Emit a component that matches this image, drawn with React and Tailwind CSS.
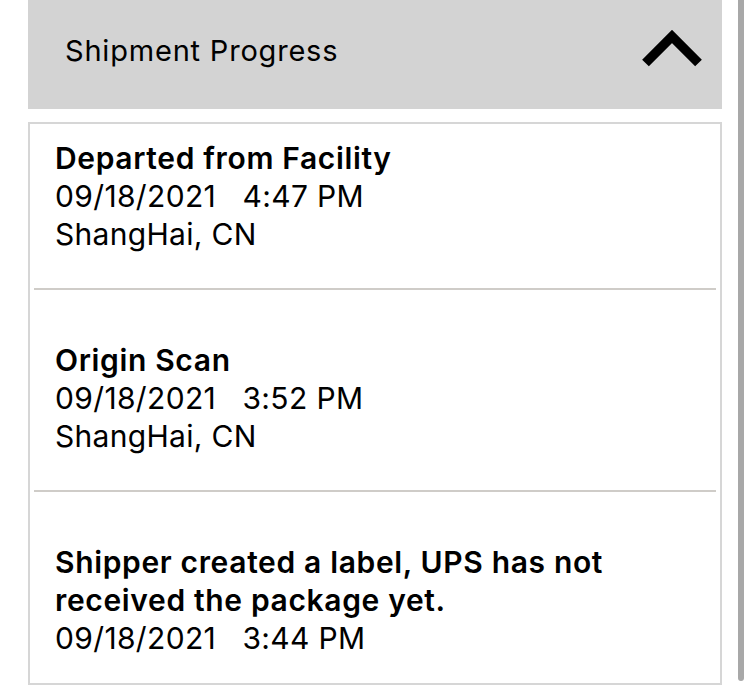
import React from "react";

const items = [
  { title: ["Departed from Facility"], date: "09/18/2021", time: "4:47 PM", loc: "ShangHai, CN" },
  { title: ["Origin Scan"], date: "09/18/2021", time: "3:52 PM", loc: "ShangHai, CN" },
  {
    title: ["Shipper created a label, UPS has not", "received the package yet."],
    date: "09/18/2021",
    time: "3:44 PM",
    loc: null,
  },
];

export default function App() {
  return (
    <div
      className="relative w-[750px] h-[685px] overflow-hidden bg-white text-black"
      style={{ fontFamily: "Inter, 'Noto Sans', sans-serif" }}
    >
      <div className="ml-[28px] w-[694px]">
        <div className="h-[109px] bg-[#d3d3d3] flex items-center justify-between pl-[37px] pr-[20px]">
          <span className="text-[29px] leading-none tracking-[0.8px] pb-[8px]">Shipment Progress</span>
          <svg width="60" height="40" viewBox="0 0 60 40" className="mb-[9px]">
            <polyline points="3.5,33 30,6.5 56.5,33" fill="none" stroke="#000" strokeWidth="9.5" strokeLinejoin="miter" />
          </svg>
        </div>
        <div className="mt-[13px] h-[563px] border-2 border-[#d6d6d6] px-[4px]">
          {items.map((it, i) => (
            <div key={i}>
              {i > 0 && <div className="h-[2px] bg-[#cfccc8] mt-[35px]" />}
              <div className={`${i === 0 ? "pt-[15px]" : "pt-[51px]"} pl-[21px] text-[30px] leading-[38px]`}>
                {it.title.map((t, j) => (
                  <div key={j} className="font-semibold tracking-[0.65px]">{t}</div>
                ))}
                <div className="tracking-[0.35px] whitespace-pre">{`${it.date}   ${it.time}`}</div>
                {it.loc && <div className="tracking-[0.3px]">{it.loc}</div>}
              </div>
            </div>
          ))}
        </div>
      </div>
      <div className="absolute left-[738px] top-0 w-[6px] h-[681px] bg-[#a8a8a8] rounded-b-[3px]" />
    </div>
  );
}
